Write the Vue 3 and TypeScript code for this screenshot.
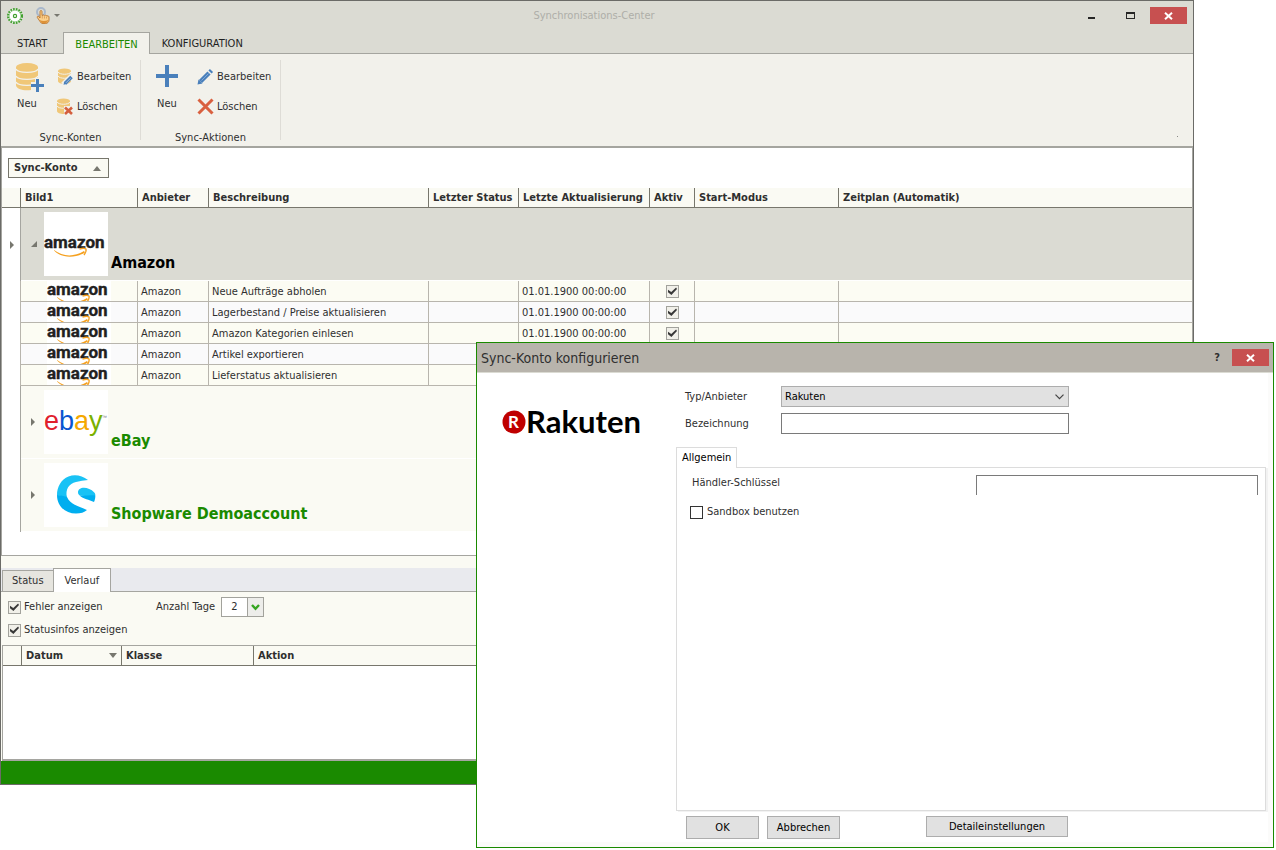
<script setup lang="ts">
import { ref } from 'vue'

interface SyncAction {
  title: string
  updated: string
  active: boolean
}

const actions = ref<SyncAction[]>([
  { title: 'Neue Aufträge abholen', updated: '01.01.1900 00:00:00', active: true },
  { title: 'Lagerbestand / Preise aktualisieren', updated: '01.01.1900 00:00:00', active: true },
  { title: 'Amazon Kategorien einlesen', updated: '01.01.1900 00:00:00', active: true },
  { title: 'Artikel exportieren', updated: '', active: true },
  { title: 'Lieferstatus aktualisieren', updated: '', active: true },
])

const columns: string[] = [
  'Bild1', 'Anbieter', 'Beschreibung', 'Letzter Status',
  'Letzte Aktualisierung', 'Aktiv', 'Start-Modus', 'Zeitplan (Automatik)',
]

const showErrors = ref(true)
const showInfos = ref(true)
const days = ref('2')
const provider = ref('Rakuten')
const accountName = ref('')
const dealerKey = ref('')
const sandbox = ref(false)
</script>

<template>
  <div class="desktop">
    <main class="window">
      <header class="titlebar">
        <svg class="gear" width="18" height="18" viewBox="0 0 18 18">
          <circle cx="9" cy="9" r="7" fill="#fff" stroke="#3f9f2c" stroke-width="2" stroke-dasharray="1.7 1.1" />
          <circle cx="9" cy="9" r="5.8" fill="#fff" stroke="#3f9f2c" stroke-width="0.5" />
          <circle cx="9" cy="9" r="1.6" fill="#fff" stroke="#3f9f2c" stroke-width="1.2" />
        </svg>
        <button class="quick" aria-label="Schnellzugriff">
          <svg width="16" height="18" viewBox="0 0 16 18">
            <circle cx="6" cy="5" r="4" fill="none" stroke="#a9b8cb" stroke-width="2" />
            <path d="M5 4.500c0-1.300 2-1.300 2 0V8.500l1.300-.6 1.200.8 1.300-.6 1.100.9 1.300-.2.800 1V13c0 2-1.500 3.500-3.500 3.500H8c-1.600 0-2.200-.7-3-2L2.300 10.500c-.5-1 .7-1.700 1.500-.9L5 11z" fill="#fbd08c" stroke="#b56a1e" stroke-width="0.800" />
            <path d="M7.300 9v2.500M9.500 9.500v2M11.500 9.800v1.700" stroke="#c98440" stroke-width="0.600" />
            <path d="M4.600 13c2.500 1.300 6 1.300 8.500 0 0 2-1.500 3.200-3.100 3.200H8C6 16.200 5.500 14.600 4.600 13z" fill="#dd9238" />
          </svg>
          <i class="drop"></i>
        </button>
        <h1>Synchronisations-Center</h1>
        <div class="controls">
          <button aria-label="Minimieren"><i class="mini"></i></button>
          <button aria-label="Maximieren"><i class="maxi"></i></button>
          <button class="close" aria-label="Schließen">
            <svg width="9" height="8" viewBox="0 0 9 8"><path d="M1 .8l7 6.400M8 .8L1 7.200" stroke="#fff" stroke-width="2" /></svg>
          </button>
        </div>
      </header>

      <nav class="tabs">
        <button>START</button>
        <button class="current">BEARBEITEN</button>
        <button>KONFIGURATION</button>
      </nav>

      <section class="ribbon">
        <div class="group">
          <div class="tools">
            <button class="big">
              <svg width="30" height="32" viewBox="0 0 30 32">
                <path d="M1 5v18c0 7 22 7 22 0V5z" fill="#f0c778" />
                <ellipse cx="12" cy="5" rx="11" ry="4" fill="#f0c778" />
                <path d="M1 7c2 4.500 20 4.500 22 0M1 14c2 4.500 20 4.500 22 0M1 20c2 4.500 20 4.500 22 0" fill="none" stroke="#f2f1eb" stroke-width="1.300" />
                <path d="M16 20h14v10H16zM20 16h5v4h-5z" fill="#f2f1eb" />
                <path d="M22.500 17v13M16 23.500h13" stroke="#4a80bb" stroke-width="3" />
              </svg>
              Neu
            </button>
            <div class="stack">
              <button>
                <svg width="17" height="17" viewBox="0 0 17 17">
                  <path d="M1 3v10c0 4 13 4 13 0V3z" fill="#f0c778" />
                  <ellipse cx="7.500" cy="3" rx="6.500" ry="2.500" fill="#f0c778" />
                  <path d="M1 4c1.500 3 11.500 3 13 0M1 8c1.500 3 11.500 3 13 0" fill="none" stroke="#f2f1eb" />
                  <path d="M6 16.500L15.500 7" stroke="#f2f1eb" stroke-width="5" />
                  <path d="M8 15.500l6.500-6.500" stroke="#4a80bb" stroke-width="3.600" />
                  <path d="M6.500 16.800l.7-3 2.300 2.300z" fill="#4a80bb" />
                  <path d="M9 14.800l4.500-4.500" stroke="#b5cce5" stroke-width="0.800" />
                </svg>
                Bearbeiten
              </button>
              <button>
                <svg width="17" height="17" viewBox="0 0 17 17">
                  <path d="M0 3v10c0 4 13 4 13 0V3z" fill="#f0c778" />
                  <ellipse cx="6.500" cy="3" rx="6.500" ry="2.500" fill="#f0c778" />
                  <path d="M0 4c1.500 3 11.500 3 13 0M0 8c1.500 3 11.500 3 13 0" fill="none" stroke="#f2f1eb" />
                  <path d="M7 8h10v9H7z" fill="#f2f1eb" />
                  <path d="M8 9.500l7 6.500M15 9.500L8 16" stroke="#d45f3e" stroke-width="2.600" />
                </svg>
                Löschen
              </button>
            </div>
          </div>
          <p>Sync-Konten</p>
        </div>
        <div class="group">
          <div class="tools">
            <button class="big">
              <svg width="30" height="32" viewBox="0 0 30 32">
                <path d="M15 3v22M4 14h22" stroke="#4a80bb" stroke-width="4" />
              </svg>
              Neu
            </button>
            <div class="stack">
              <button>
                <svg width="17" height="17" viewBox="0 0 17 17">
                  <path d="M3.500 13.500L12 5" stroke="#4a80bb" stroke-width="4.500" />
                  <path d="M0.500 16.500l1-5L5.500 15.500z" fill="#4a80bb" />
                  <path d="M13 4l1.500-1.500" stroke="#4a80bb" stroke-width="4.500" stroke-linejoin="round" />
                  <path d="M11 3l3 3" stroke="#f2f1eb" stroke-width="0.800" />
                  <path d="M4.500 12.500l7-7" stroke="#8fb3dc" stroke-width="0.800" />
                </svg>
                Bearbeiten
              </button>
              <button>
                <svg width="17" height="17" viewBox="0 0 17 17">
                  <path d="M1.500 1.500l14 14M15.500 1.500l-14 14" stroke="#d9603f" stroke-width="3" />
                </svg>
                Löschen
              </button>
            </div>
          </div>
          <p>Sync-Aktionen</p>
        </div>
        <i class="launcher"></i>
      </section>

      <section class="grid">
        <div class="grouping">
          <button>Sync-Konto <i class="asc"></i></button>
        </div>
        <table class="accounts">
          <colgroup>
            <col class="w-mark" /><col class="w-img" /><col class="w-vendor" /><col class="w-desc" />
            <col class="w-state" /><col class="w-date" /><col class="w-active" /><col class="w-mode" /><col />
          </colgroup>
          <thead>
            <tr>
              <th class="mark"></th>
              <th v-for="c in columns" :key="c">{{ c }}</th>
            </tr>
          </thead>
          <tbody>
            <tr class="account focused">
              <td class="mark"><i class="right"></i></td>
              <td colspan="8">
                <div class="entry">
                  <i class="open"></i>
                  <svg class="logo" width="64" height="64" viewBox="0 0 64 64">
                    <text class="amazon" x="0" y="36">amazon</text>
                    <path d="M10 38c9 7 20 7 30 1l1 1.500c-10 6-23 6-31-2z" fill="#f5a01e" />
                    <path d="M35.500 37.200c3-1.200 5.500-1 6.500-.2.400 1.500-.4 4-2 6" fill="none" stroke="#f5a01e" stroke-width="1.300" />
                  </svg>
                  <strong>Amazon</strong>
                </div>
              </td>
            </tr>
            <tr v-for="a in actions" :key="a.title" class="action">
              <td class="mark"></td>
              <td class="pic">
                <svg class="logo" width="64" height="20" viewBox="0 22 64 20">
                  <text class="amazon" x="0" y="36">amazon</text>
                  <path d="M10 38c9 7 20 7 30 1l1 1.500c-10 6-23 6-31-2z" fill="#f5a01e" />
                  <path d="M35.500 37.200c3-1.200 5.500-1 6.500-.2.400 1.500-.4 4-2 6" fill="none" stroke="#f5a01e" stroke-width="1.300" />
                </svg>
              </td>
              <td>Amazon</td>
              <td>{{ a.title }}</td>
              <td></td>
              <td>{{ a.updated }}</td>
              <td class="tick"><input v-model="a.active" type="checkbox" class="check" :aria-label="a.title" /></td>
              <td></td>
              <td></td>
            </tr>
            <tr class="account">
              <td class="mark"></td>
              <td colspan="8">
                <div class="entry">
                  <i class="right"></i>
                  <svg class="logo" width="64" height="64" viewBox="0 0 64 64">
                    <text class="ebay" x="0" y="40"><tspan fill="#e0202c">e</tspan><tspan fill="#0a55d0">b</tspan><tspan fill="#f5a800">a</tspan><tspan fill="#7ab100">y</tspan></text>
                    <text class="tm" x="58" y="29">™</text>
                  </svg>
                  <strong>eBay</strong>
                </div>
              </td>
            </tr>
            <tr class="account">
              <td class="mark"></td>
              <td colspan="8">
                <div class="entry">
                  <i class="right"></i>
                  <svg class="logo" width="64" height="64" viewBox="0 0 64 64">
                    <path d="M44 17C38 12.500 31 11 24.500 13.500 17 16.500 13 24 13 32l10 2.500c-2-8 2-14 9-15.500 4-.9 8-1.500 12-2z" fill="#19c2f5" />
                    <path d="M13 32c0 11 8 18.500 19 18.500 4.500 0 8.500-1 11-3.500-9-4-17-6-20-13-3-1-6-2-10-2z" fill="#00aeef" />
                    <path d="M34 29.500c0-6 10-6.500 16.300 0 .6.600.9 1.200 1 2L51 34l-15-1.500c-1.200-.7-2-1.700-2-3z" fill="#19c2f5" />
                    <path d="M35.500 32.500c4 3.500 9.500 4 14.500 6.500 1-2 1.400-4.200 1.300-6.500C46 31.500 41 33 35.500 32.500z" fill="#00aeef" />
                  </svg>
                  <strong>Shopware Demoaccount</strong>
                </div>
              </td>
            </tr>
          </tbody>
        </table>
      </section>

      <nav class="subtabs">
        <button>Status</button>
        <button class="current">Verlauf</button>
      </nav>
      <section class="history">
        <div class="filters">
          <label><input v-model="showErrors" type="checkbox" class="check" />Fehler anzeigen</label>
          <div class="days">
            <label for="days">Anzahl Tage</label>
            <div class="picker">
              <select id="days" v-model="days">
                <option>1</option>
                <option>2</option>
                <option>7</option>
              </select>
              <span class="arrow">
                <svg width="9" height="7" viewBox="0 0 9 7"><path d="M1 1l3.500 3.700L8 1" fill="none" stroke="#35a520" stroke-width="2.400" /></svg>
              </span>
            </div>
          </div>
          <label><input v-model="showInfos" type="checkbox" class="check" />Statusinfos anzeigen</label>
        </div>
        <div class="log">
          <table>
            <colgroup><col class="w-mark" /><col class="w-day" /><col class="w-class" /><col /></colgroup>
            <thead>
              <tr>
                <th></th>
                <th><div class="sorted">Datum <i class="desc"></i></div></th>
                <th>Klasse</th>
                <th>Aktion</th>
              </tr>
            </thead>
          </table>
        </div>
      </section>
      <footer class="status"></footer>
    </main>

    <section class="dialog" role="dialog" aria-labelledby="dialog-title">
      <header>
        <h2 id="dialog-title">Sync-Konto konfigurieren</h2>
        <button class="help" aria-label="Hilfe">?</button>
        <button class="close" aria-label="Schließen">
          <svg width="9" height="8" viewBox="0 0 9 8"><path d="M1 .8l7 6.400M8 .8L1 7.200" stroke="#fff" stroke-width="2" /></svg>
        </button>
      </header>
      <div class="body">
        <aside>
          <svg width="144" height="30" viewBox="0 0 144 30">
            <circle cx="12" cy="15" r="11.500" fill="#bf0000" />
            <text class="badge" x="6" y="21">R</text>
            <text class="rakuten" x="24" y="26">Rakuten</text>
          </svg>
        </aside>
        <form @submit.prevent>
          <div class="field">
            <label for="provider">Typ/Anbieter</label>
            <div class="combo">
              <select id="provider" v-model="provider">
                <option>Rakuten</option>
                <option>Amazon</option>
                <option>eBay</option>
              </select>
              <svg width="9" height="6" viewBox="0 0 9 6"><path d="M.5.700l4 4 4-4" fill="none" stroke="#444" stroke-width="1.200" /></svg>
            </div>
          </div>
          <div class="field">
            <label for="account">Bezeichnung</label>
            <input id="account" v-model="accountName" type="text" />
          </div>
          <button type="button" class="page">Allgemein</button>
          <div class="panel">
            <div class="key">
              <label for="key">Händler-Schlüssel</label>
              <input id="key" v-model="dealerKey" type="text" />
            </div>
            <label class="sandbox"><input v-model="sandbox" type="checkbox" />Sandbox benutzen</label>
          </div>
          <div class="buttons">
            <button type="submit">OK</button>
            <button type="button">Abbrechen</button>
            <button type="button" class="details">Detaileinstellungen</button>
          </div>
        </form>
      </div>
    </section>
  </div>
</template>

<style>
body {
  margin: 0;
  background: #fff;
}
</style>

<style scoped>
* {
  box-sizing: border-box;
}
.desktop {
  position: relative;
  min-height: 850px;
  padding-right: 82px;
  font: 11px/14px "DejaVu Sans Condensed", "Noto Sans", sans-serif;
  color: #2f2f2f;
}
button,
input,
select {
  margin: 0;
  padding: 0;
  border: 0;
  border-radius: 0;
  background: none;
  font: inherit;
  color: inherit;
}
h1,
h2,
p {
  margin: 0;
  font: inherit;
}
i {
  display: block;
  flex: none;
}
svg {
  display: block;
  flex: none;
}
.window {
  border: 1px solid #6b6b67;
  background: #fafaf3;
}
.titlebar {
  display: flex;
  align-items: center;
  height: 31px;
  padding: 0 6px 2px 5px;
  background: #dbdbd3;
}
.quick {
  display: flex;
  align-items: center;
  gap: 3px;
  margin-left: 11px;
}
.drop {
  border: solid transparent;
  border-width: 3px 3px 0;
  border-top-color: #77776f;
}
.titlebar h1 {
  flex: 1;
  padding-left: 56px;
  text-align: center;
  color: #aeaea8;
}
.controls {
  display: flex;
  align-items: center;
}
.controls button {
  display: flex;
  align-items: center;
  justify-content: center;
  width: 39px;
  height: 17px;
}
.mini {
  width: 7px;
  height: 2px;
  margin-top: 4px;
  background: #262626;
}
.maxi {
  width: 9px;
  height: 7px;
  border: 1px solid #262626;
  border-top-width: 2px;
}
.controls button.close,
button.close {
  display: flex;
  align-items: center;
  justify-content: center;
  width: 37px;
  height: 17px;
  background: #c75050;
}
.tabs {
  display: flex;
  height: 22px;
  background: #dbdbd3;
  box-shadow: inset 0 -1px #a5a59f;
  color: #1e1e1e;
}
.tabs button {
  padding: 2px 12px 0;
}
.tabs button:first-child {
  padding: 2px 16px 0;
}
.tabs .current {
  padding: 2px 11px 0;
  border: 1px solid #a5a59f;
  border-bottom: 0;
  background: #f2f1eb;
  color: #1a8a00;
}
.ribbon {
  display: flex;
  align-items: flex-start;
  height: 94px;
  padding-top: 6px;
  border-bottom: 2px solid #a5a59f;
  background: #f2f1eb;
}
.group {
  display: flex;
  flex-direction: column;
  justify-content: space-between;
  height: 80px;
  min-width: 140px;
  border-right: 1px solid #dedcd6;
}
.group p {
  text-align: center;
  line-height: 4px;
}
.tools {
  display: flex;
  gap: 10px;
  padding-left: 11px;
}
.big {
  display: flex;
  flex-direction: column;
  align-items: center;
  gap: 3px;
  width: 30px;
  padding-top: 2px;
}
.big svg {
  margin-left: 5px;
}
.group + .group .big svg {
  margin-left: 0;
}
.stack {
  display: flex;
  flex-direction: column;
  gap: 13px;
  padding: 8px 0 0 5px;
}
.stack button {
  display: flex;
  align-items: center;
  gap: 3px;
  height: 17px;
}
.launcher {
  align-self: flex-end;
  width: 1px;
  height: 1px;
  margin: 0 15px 9px auto;
  background: #8a8a86;
}
.grid {
  min-height: 408px;
  border: 1px solid #a5a5a0;
  border-top: 0;
  background: #fff;
}
.grouping {
  padding: 10px 6px;
}
.grouping button {
  display: flex;
  align-items: center;
  gap: 16px;
  height: 20px;
  padding: 0 7px 0 5px;
  border: 1px solid #77766c;
  background: #fafaf3;
  font-weight: bold;
}
.asc {
  border: solid transparent;
  border-width: 0 4px 5px;
  border-bottom-color: #77776f;
}
.desc {
  border: solid transparent;
  border-width: 5px 4px 0;
  border-top-color: #77776f;
}
.right {
  border: solid transparent;
  border-width: 4px 0 4px 4px;
  border-left-color: #77776f;
}
.open {
  width: 6px;
  height: 6px;
  background: #77776f;
  clip-path: polygon(100% 0, 100% 100%, 0 100%);
}
table {
  width: 100%;
  border-collapse: separate;
  border-spacing: 0;
  table-layout: fixed;
}
.w-mark { width: 19px; }
.w-img { width: 117px; }
.w-vendor { width: 71px; }
.w-desc { width: 220px; }
.w-state { width: 90px; }
.w-date { width: 131px; }
.w-active { width: 45px; }
.w-mode { width: 144px; }
.w-day { width: 100px; }
.w-class { width: 132px; }
th {
  height: 20px;
  padding: 0 0 0 4px;
  border-right: 1px solid #77766c;
  border-bottom: 1px solid #77766c;
  background: #fafaf3;
  text-align: left;
  font-weight: bold;
  white-space: nowrap;
}
th:last-child {
  border-right: 0;
}
td {
  padding: 0 0 0 3px;
  white-space: nowrap;
}
td.mark {
  padding: 0 0 0 8px;
  border-right: 1px solid #a5a5a0;
  background: #fff;
}
.account td:last-child {
  height: 73px;
  padding: 0;
  border-bottom: 1px solid #fff;
  background: #fafaf3;
}
.account.focused td:last-child {
  background: #dbdbd3;
}
.entry {
  display: flex;
  align-items: center;
  padding-left: 10px;
}
.entry .logo {
  margin: 0 3px 0 9px;
}
.entry .open + .logo {
  margin-left: 7px;
}
.entry strong {
  align-self: flex-end;
  padding-bottom: 3px;
  font-size: 16px;
  line-height: 20px;
  color: #1a8a00;
}
.focused strong {
  color: #000;
}
.logo {
  background: #fff;
}
.amazon {
  font: bold 17px Roboto, sans-serif;
  fill: #221f1f;
  stroke: #221f1f;
  stroke-width: 0.4px;
}
.ebay {
  font: 27px "Liberation Sans", sans-serif;
}
.tm {
  font: 5px "Liberation Sans", sans-serif;
  fill: #777;
}
.action td {
  height: 21px;
  padding-top: 1px;
  border-bottom: 1px solid #b8b5ad;
  border-right: 1px solid #b8b5ad;
  background: #fcfcf3;
}
.action:nth-child(odd) td {
  background: #fafafb;
}
.action td.mark,
.action:nth-child(odd) td.mark {
  border-bottom: 0;
  background: #fff;
}
.action td:last-child {
  border-right: 0;
}
.action td.pic {
  padding: 0 0 0 26px;
}
.action td.tick {
  padding: 0 0 0 16px;
}
.check {
  display: flex;
  align-items: center;
  justify-content: center;
  flex: none;
  width: 13px;
  height: 13px;
  border: 1px solid #a2a29c;
  background: #f1f0e9;
  appearance: none;
}
.check:checked::after {
  content: "";
  width: 9px;
  height: 8px;
  background: #383838;
  clip-path: polygon(0 35%, 36% 62%, 90% 6%, 100% 24%, 38% 100%, 0 66%);
}
.subtabs {
  display: flex;
  align-items: flex-end;
  height: 24px;
  margin-top: 12px;
  padding-left: 1px;
  background: #e9eaee;
  box-shadow: inset 0 -1px #a5a5a0;
}
.subtabs button {
  height: 22px;
  padding: 0 9px;
  border: 1px solid #a5a5a0;
  background: #e6e5df;
}
.subtabs .current {
  height: 24px;
  margin-left: -1px;
  padding: 0 11px;
  border-bottom: 0;
  background: #fff;
}
.history {
  padding-left: 1px;
}
.filters {
  display: grid;
  grid-template-columns: 148px 1fr;
  grid-auto-rows: 20px;
  row-gap: 3px;
  align-items: center;
  padding: 5px 0 5px 6px;
}
.filters label {
  display: flex;
  align-items: center;
  gap: 3px;
  white-space: nowrap;
}
.days {
  display: flex;
  align-items: center;
  gap: 6px;
}
.picker {
  display: flex;
  width: 43px;
  height: 20px;
  border: 1px solid #a2a29c;
  background: #fff;
}
.picker select {
  flex: 1;
  padding-left: 9px;
  appearance: none;
}
.arrow {
  display: flex;
  align-items: center;
  justify-content: center;
  width: 16px;
  border-left: 1px solid #a2a29c;
  background: #ededea;
}
.log {
  min-height: 116px;
  border: 1px solid #a5a5a0;
  border-bottom-width: 2px;
  background: #fff;
}
.sorted {
  display: flex;
  align-items: center;
  justify-content: space-between;
  padding-right: 4px;
}
.status {
  height: 23px;
  background: #1a8a00;
}
.dialog {
  position: absolute;
  top: 342px;
  right: 2px;
  left: 476px;
  border: 1px solid #1a8a00;
  background: #fbfbfa;
}
.dialog > header {
  display: flex;
  align-items: center;
  height: 30px;
  padding: 0 4px;
  border-bottom: 1px solid #dbdbd3;
  background: #b8b4ac;
}
.dialog h2 {
  flex: 1;
  font-size: 14px;
}
.help {
  width: 30px;
  font-weight: bold;
}
.body {
  display: flex;
  margin: 0 5px 5px 0;
  background: #fff;
}
aside {
  width: 199px;
  flex: none;
  padding: 34px 0 0 25px;
}
.badge {
  font: bold 17px Lato, sans-serif;
  fill: #fff;
}
.rakuten {
  font: bold 31px Lato, sans-serif;
  fill: #000;
}
form {
  flex: 1;
  padding: 13px 2px 3px 0;
}
.field {
  display: flex;
  height: 21px;
  margin-bottom: 6px;
  padding-left: 9px;
}
.field label {
  width: 96px;
  padding-top: 4px;
}
.combo {
  display: flex;
  align-items: center;
  width: 288px;
  padding-right: 4px;
  border: 1px solid #adadad;
  background: #e1e1e1;
  color: #000;
}
.combo select {
  flex: 1;
  padding-left: 3px;
  appearance: none;
}
.field input {
  width: 288px;
  padding: 0 3px;
  border: 1px solid #7a7a7a;
}
.page {
  display: block;
  position: relative;
  height: 21px;
  margin: 13px 0 -1px;
  padding: 0 5px;
  border: 1px solid #dcdcdc;
  border-bottom: 0;
  background: #fff;
  color: #000;
}
.panel {
  min-height: 344px;
  padding: 7px 7px 0 13px;
  border: 1px solid #dcdcdc;
  box-shadow: 2px 1px #f2f2f2;
}
.key {
  display: flex;
  justify-content: space-between;
  padding-left: 2px;
}
.key label {
  padding-top: 1px;
}
.key input {
  width: 282px;
  height: 20px;
  padding: 0 3px;
  border: 1px solid #7a7a7a;
  border-bottom: 0;
}
.sandbox {
  display: flex;
  gap: 4px;
  margin-top: 10px;
}
.sandbox input {
  width: 13px;
  height: 13px;
  margin-top: 1px;
  border: 1px solid #333;
  background: #fff;
  appearance: none;
}
.sandbox input:checked {
  background: #333;
}
.buttons {
  display: flex;
  align-items: flex-start;
  gap: 8px;
  padding: 5px 0 0 10px;
  color: #000;
}
.buttons button {
  width: 73px;
  height: 23px;
  border: 1px solid #adadad;
  background: #e1e1e1;
}
.buttons .details {
  width: 142px;
  height: 21px;
  margin-left: 78px;
}
</style>
